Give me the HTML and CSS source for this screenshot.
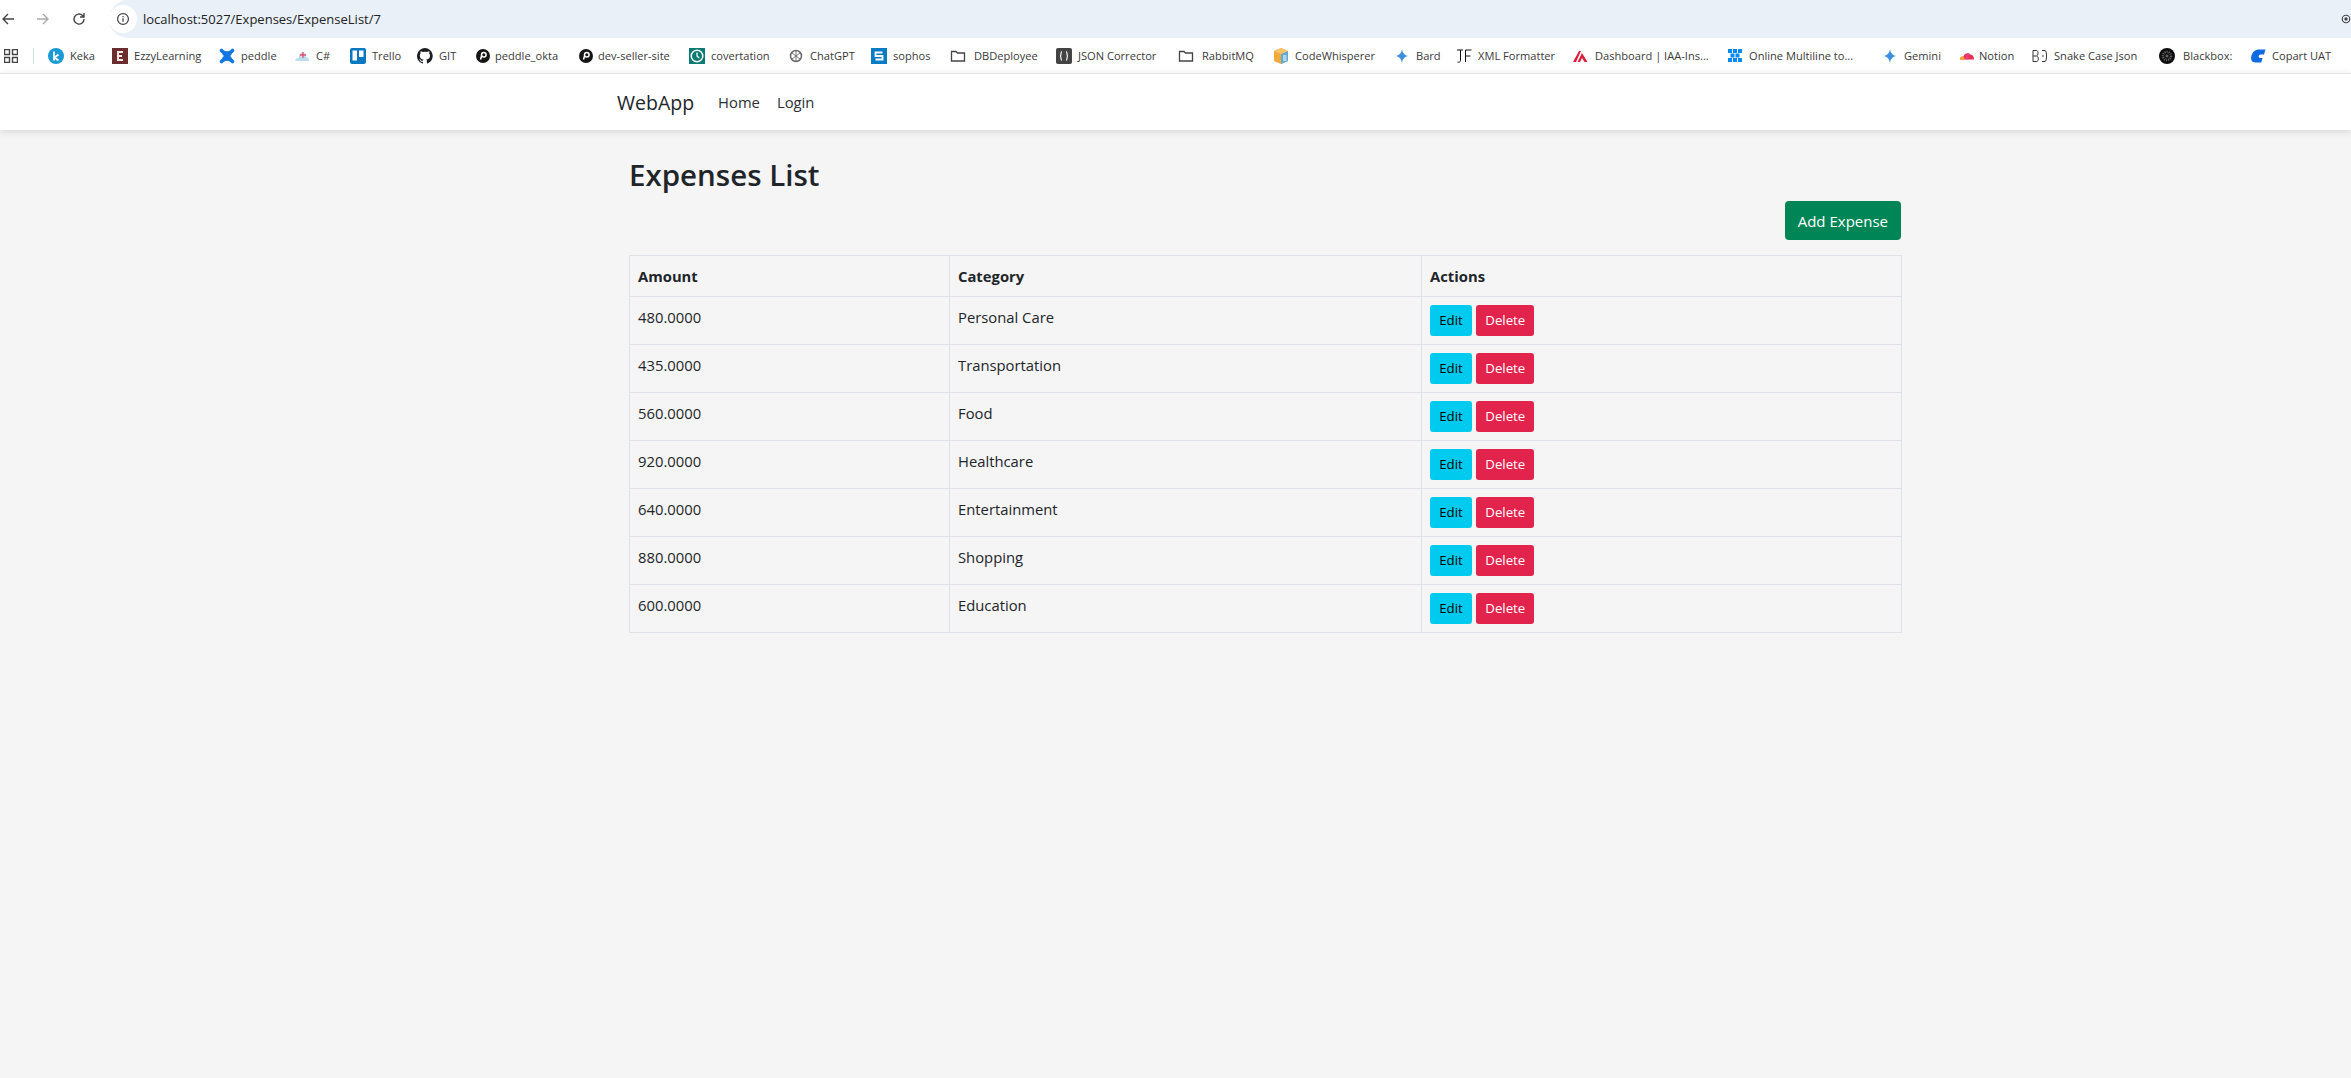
FILE: index.html
```html
<!DOCTYPE html>
<html lang="en">
<head>
<meta charset="utf-8">
<title>Expenses List</title>
<link rel="stylesheet" href="styles.css">
</head>
<body>
<header class="chrome">
  <div class="toolbar">
    <svg class="tool" viewBox="0 0 16 16"><path d="M14 8H3M8 3 3 8l5 5" class="st"/></svg>
    <svg class="tool fwd" viewBox="0 0 16 16"><path d="M2 8h11M8 3l5 5-5 5" class="st-l"/></svg>
    <svg class="tool reload" viewBox="0 0 16 16"><path d="M13 8a5 5 0 1 1-1.500-3.500L13 6M13 2v4H9" class="st"/></svg>
    <div class="omnibox">
      <span class="info"><svg viewBox="0 0 16 16" width="14" height="14"><circle cx="8" cy="8" r="6.200" class="st"/><path d="M8 7v4.200M8 4.500v1.400" class="st"/></svg></span>
      <span class="url">localhost:5027/Expenses/ExpenseList/7</span>
      <svg class="ext" viewBox="0 0 12 12"><circle cx="6" cy="6" r="4.500" class="st"/><circle cx="6" cy="6" r="2" fill="#444"/></svg>
    </div>
  </div>
  <div class="bookmarks">
    <svg class="apps" viewBox="0 0 14 14"><path d="M.5.5h5v5h-5zM8.500.5h5v5h-5zM.5 8.500h5v5h-5zM8.500 8.500h5v5h-5z" class="st"/></svg>
    <span class="sep"></span>
    <nav class="bm-grid">
      <a class="bm"><svg viewBox="0 0 16 16"><circle cx="8" cy="8" r="8" fill="#1b9ad6"/><path d="M6 3.500v9M10.500 6.500 6.500 9.500l4 3" stroke="#fff" stroke-width="1.800" fill="none"/></svg>Keka</a>
      <a class="bm"><svg viewBox="0 0 16 16"><rect width="16" height="16" fill="#6b2d2d"/><path d="M5 3h6v2H7v2h3v2H7v2h4v2H5z" fill="#f1e6e0"/></svg>EzzyLearning</a>
      <a class="bm"><svg viewBox="0 0 16 16"><path d="M2.500 2.500C5 6 11 6 13.500 2.500M2.500 13.500C5 10 11 10 13.500 13.500M5 5.500c2 1.500 2 3.500 0 5M11 5.500c-2 1.500-2 3.500 0 5" stroke="#1277e1" stroke-width="3.600" fill="none" stroke-linecap="round"/></svg>peddle</a>
      <a class="bm"><svg viewBox="0 0 16 16"><path d="M1 13c.5-2 2-3 3.500-3C5 6 7 3.500 9 4c2 .5 3 3 3 5 2 0 3 2 3 4z" fill="#bcdcf0"/><path d="M6 7h6M9 4v6" stroke="#e6506a" stroke-width="1.300"/></svg>C#</a>
      <a class="bm"><svg viewBox="0 0 16 16"><rect width="16" height="16" rx="2" fill="#0a79bf"/><rect x="2.500" y="2.500" width="4.500" height="10" fill="#fff"/><rect x="9" y="2.500" width="4.500" height="6.500" fill="#fff"/></svg>Trello</a>
      <a class="bm"><svg viewBox="0 0 16 16"><path d="M8 0a8 8 0 0 0-2.500 15.600c.4.100.5-.2.500-.4v-1.400c-2.200.5-2.700-1-2.700-1-.4-.9-.9-1.200-.9-1.200-.7-.5.100-.5.100-.5.800.100 1.200.8 1.200.8.700 1.200 1.900.9 2.300.7.100-.5.300-.9.500-1.100-1.800-.2-3.700-.9-3.700-4 0-.9.300-1.600.8-2.100-.1-.2-.4-1 .1-2.100 0 0 .7-.2 2.200.8a7.600 7.600 0 0 1 4 0c1.500-1 2.200-.8 2.200-.8.500 1.100.2 1.900.1 2.100.5.600.8 1.300.8 2.100 0 3.100-1.900 3.700-3.700 3.900.3.300.6.700.6 1.500v2.200c0 .2.100.5.600.4A8 8 0 0 0 8 0z" fill="#1b1f23"/></svg>GIT</a>
      <a class="bm bm-tight"><svg viewBox="0 0 16 16"><circle cx="8" cy="8" r="7" fill="#151515"/><circle cx="8.800" cy="6.800" r="2.300" fill="none" stroke="#fff" stroke-width="1.500"/><path d="M6.700 7.500 5.500 11.500" stroke="#fff" stroke-width="1.500"/></svg>peddle_okta</a>
      <a class="bm bm-tight"><svg viewBox="0 0 16 16"><circle cx="8" cy="8" r="7" fill="#151515"/><circle cx="8.800" cy="6.800" r="2.300" fill="none" stroke="#fff" stroke-width="1.500"/><path d="M6.700 7.500 5.500 11.500" stroke="#fff" stroke-width="1.500"/></svg>dev-seller-site</a>
      <a class="bm"><svg viewBox="0 0 16 16"><rect width="16" height="16" fill="#0b7a75"/><circle cx="8" cy="8" r="6.500" fill="#fff"/><circle cx="8" cy="8" r="5" fill="#0b7a75"/><path d="M8 4.500V8l2.200 2" stroke="#fff" stroke-width="1.300" fill="none"/></svg>covertation</a>
      <a class="bm"><svg viewBox="0 0 16 16"><circle cx="8" cy="8" r="5.500" fill="none" stroke="#666" stroke-width="1.500"/><path d="M4 5l8 6M12 5l-8 6M8 2.500v11" stroke="#777" stroke-width="1"/></svg>ChatGPT</a>
      <a class="bm"><svg viewBox="0 0 16 16"><rect width="16" height="16" fill="#0a7cc4"/><path d="M11.500 4.500h-7v3.500h7v3.500h-7" stroke="#fff" stroke-width="1.800" fill="none"/></svg>sophos</a>
      <a class="bm bm-wide"><svg viewBox="0 0 16 16"><path d="M1.500 3.500h4.500l1.500 1.500h7v8h-13z" class="folder"/></svg>DBDeployee</a>
      <a class="bm"><svg viewBox="0 0 16 16"><rect width="16" height="16" rx="2" fill="#444"/><path d="M6 3.500c-2 0 0 4.500-2 4.500 2 0 0 4.500 2 4.500M10 3.500c2 0 0 4.500 2 4.500-2 0 0 4.500-2 4.500" stroke="#fff" stroke-width="1.200" fill="none"/></svg>JSON Corrector</a>
      <a class="bm bm-wide"><svg viewBox="0 0 16 16"><path d="M1.500 3.500h4.500l1.500 1.500h7v8h-13z" class="folder"/></svg>RabbitMQ</a>
      <a class="bm"><svg viewBox="0 0 16 16"><path d="M1 3 8 0l7 3v10l-7 3-7-3z" fill="#f2a93b"/><path d="M8 6l7-3v10l-7 3z" fill="#5faad6"/><path d="M1 3l7 3 7-3-7-3z" fill="#f8c46a"/><path d="M10 8h3.500M10 10h3.500M10 12h3.500" stroke="#fff"/></svg>CodeWhisperer</a>
      <a class="bm"><svg viewBox="0 0 16 16"><path d="M8 1c.6 4 2.500 6.200 6.500 7-4 .8-5.900 3-6.500 7-.6-4-2.500-6.200-6.500-7 4-.8 5.900-3 6.500-7z" fill="#3f8fe0"/></svg>Bard</a>
      <a class="bm"><svg viewBox="0 0 16 16"><path d="M1 2h6M4.500 2v10.500c0 1.500-1.500 2-3 1.500M9.500 14V2h6M9.500 8h5" stroke="#111" stroke-width="1" fill="none"/></svg>XML Formatter</a>
      <a class="bm"><svg viewBox="0 0 16 16"><path d="M0 14 6 3h2L3 14zM4.500 14 9 5l5.500 9h-3L9 10l-2 4z" fill="#d9213d"/></svg>Dashboard | IAA-Ins...</a>
      <a class="bm"><svg viewBox="0 0 16 16"><path d="M1 1h4v4H1zM6 1h4v4H6zM11 1h4v4h-4zM3.500 5.500h4v4h-4zM8.500 5.500h4v4h-4zM1 10h4v4H1zM6 10h4v4H6zM11 10h4v4h-4z" fill="#0a8af0"/></svg>Online Multiline to...</a>
      <a class="bm"><svg viewBox="0 0 16 16"><path d="M8 1c.6 4 2.500 6.200 6.500 7-4 .8-5.900 3-6.500 7-.6-4-2.500-6.200-6.500-7 4-.8 5.900-3 6.500-7z" fill="#3f8fe0"/></svg>Gemini</a>
      <a class="bm bm-tight"><svg viewBox="0 0 16 16"><path d="M1 11.500C1 9 3 8 4.500 8.500 5.500 5 10 4.500 11 6.500c2.500-.5 4 2 4 5z" fill="#e8304a"/><path d="M1 11.500C1 9 3 8 4.500 8.500c1 .8 1.200 2 1 3z" fill="#f4a323"/><path d="M8 5.600c2-.5 3 .3 3 1-1.500 1-1.500 3-1 4.900H7c-.5-2 0-4 1-5.900z" fill="#ea3e8a"/></svg>Notion</a>
      <a class="bm"><svg viewBox="0 0 16 16"><path d="M1 2.500h3.500c2 0 2 5 0 5.500 2.500.5 2.500 5.500 0 5.500H1zM1 8h3M10 2.500h3c2 0 2 11 0 11h-3M12 8h-2" stroke="#333" fill="none"/></svg>Snake Case Json</a>
      <a class="bm bm-wide"><svg viewBox="0 0 16 16"><circle cx="8" cy="8" r="8" fill="#0d0d0d"/><circle cx="8" cy="8" r="4" fill="none" stroke="#666" stroke-width="2.500" stroke-dasharray="1 1"/><circle cx="8" cy="8" r="1.500" fill="#666"/></svg>Blackbox:</a>
      <a class="bm"><svg viewBox="0 0 16 16"><path d="M15.500 1.500 14 6.500h-3.500c-2 0-2.500 3.500-.5 3.500h2.500l-1.200 4.500H6C1 14.500.5 11 1.500 7.500 3 3 6 1.500 9.500 1.500z" fill="#0f6be0"/></svg>Copart UAT</a>
    </nav>
  </div>
</header>

<div class="navbar">
  <a class="brand">WebApp</a>
  <a class="nav-link">Home</a>
  <a class="nav-link">Login</a>
</div>

<main class="content">
  <h1 class="title">Expenses List</h1>
  <div class="actions"><a class="btn btn-add">Add Expense</a></div>
  <table class="grid">
    <colgroup><col class="c1"><col class="c2"><col class="c3"></colgroup>
    <thead><tr><th>Amount</th><th>Category</th><th>Actions</th></tr></thead>
    <tbody>
      <tr><td>480.0000</td><td>Personal Care</td><td><a class="btn-sm edit">Edit</a><a class="btn-sm del">Delete</a></td></tr>
      <tr><td>435.0000</td><td>Transportation</td><td><a class="btn-sm edit">Edit</a><a class="btn-sm del">Delete</a></td></tr>
      <tr><td>560.0000</td><td>Food</td><td><a class="btn-sm edit">Edit</a><a class="btn-sm del">Delete</a></td></tr>
      <tr><td>920.0000</td><td>Healthcare</td><td><a class="btn-sm edit">Edit</a><a class="btn-sm del">Delete</a></td></tr>
      <tr><td>640.0000</td><td>Entertainment</td><td><a class="btn-sm edit">Edit</a><a class="btn-sm del">Delete</a></td></tr>
      <tr><td>880.0000</td><td>Shopping</td><td><a class="btn-sm edit">Edit</a><a class="btn-sm del">Delete</a></td></tr>
      <tr><td>600.0000</td><td>Education</td><td><a class="btn-sm edit">Edit</a><a class="btn-sm del">Delete</a></td></tr>
    </tbody>
  </table>
</main>
</body>
</html>
```

FILE: styles.css
```css
* { box-sizing: border-box; }
html, body { height: 100%; }
body {
  margin: 0;
  background: #f5f5f5;
  color: #212529;
  font-family: "Open Sans", "Liberation Sans", sans-serif;
  font-size: 14.8px;
  overflow: hidden;
}
.st { fill: none; stroke: #444; stroke-width: 1.4; }
.st-l { fill: none; stroke: #aaa; stroke-width: 1.4; }
.folder { fill: none; stroke: #444; stroke-width: 1.3; }

.chrome { background: #fff; }
.toolbar { display: flex; align-items: center; height: 38px; }
.tool { width: 16px; height: 16px; flex: none; }
.fwd { margin-left: 19px; }
.reload { margin-left: 20px; margin-right: 22px; }
.omnibox {
  flex: 1;
  height: 38px;
  background: #e9f0f8;
  border-radius: 19px 0 0 19px;
  display: flex;
  align-items: center;
}
.info {
  width: 28px; height: 28px;
  border-radius: 50%;
  background: #fff;
  display: flex; align-items: center; justify-content: center;
}
.url { margin-left: 6px; font-size: 13px; color: #222; flex: 1; }
.ext { width: 10px; height: 10px; }

.bookmarks { display: flex; align-items: center; height: 35px; }
.apps { width: 14px; height: 14px; margin-left: 4px; flex: none; }
.sep { width: 1px; height: 16px; background: #cfdcec; margin: 0 14px 0 15px; flex: none; }
.bm-grid {
  display: grid;
  grid-template-columns: 64px 107px 75px 56px 67px 58px 103px 111px 99px 83px 79px 106px 122px 95px 121px 62px 117px 154px 155px 77px 73px 127px 91px 100px;
  flex: 1;
}
.bm {
  display: flex; align-items: center; gap: 6px;
  font-size: 11.1px; color: #3a3a3a; white-space: nowrap; height: 18px;
}
.bm-tight { gap: 4px; }
.bm-wide { gap: 8px; }
.bm svg { width: 16px; height: 16px; flex: none; }

.navbar {
  display: flex; align-items: center;
  height: 57px;
  background: #fff;
  border-top: 1px solid #e3e3e3;
  padding-left: 617px;
  box-shadow: 0 2px 8px rgba(0,0,0,.12);
  position: relative;
}
.brand { font-size: 19.5px; margin-right: 24px; color: #212529; }
.nav-link { font-size: 14.8px; margin-right: 17px; color: #2b3035; }

.content { width: 1272px; margin-left: 629px; }
.title { font-size: 29.5px; font-weight: 600; line-height: 38px; margin: 26px 0 7px; }
.actions { display: flex; justify-content: flex-end; margin-bottom: 15px; }
.btn {
  display: flex; align-items: center; height: 39px; padding: 0 13px;
  border-radius: 4px; font-size: 15px;
}
.btn-add { background: #008556; color: #fff; }
.grid { width: 1272px; border-collapse: collapse; table-layout: fixed; }
.c1 { width: 320px; } .c2 { width: 472px; } .c3 { width: 480px; }
.grid th, .grid td {
  border: 1px solid #dee2e6;
  padding: 8px;
  line-height: 24px;
  text-align: left;
  vertical-align: top;
}
.grid th { font-weight: 700; height: 41px; }
.grid td { height: 48px; }
.btn-sm {
  display: inline-block;
  height: 31px; line-height: 31px;
  padding: 0 9.3px;
  border-radius: 3px;
  font-size: 13.2px;
  vertical-align: top;
}
.edit { background: #00cbee; color: #000; margin-right: 4px; }
.del { background: #e2234c; color: #fff; }
```
